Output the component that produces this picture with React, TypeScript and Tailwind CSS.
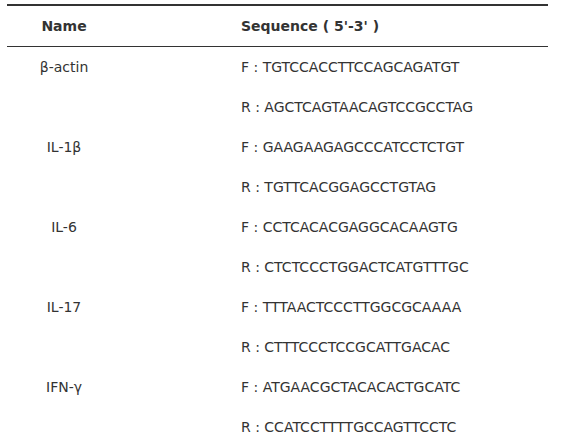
const primers = [
  { name: "β-actin", f: "TGTCCACCTTCCAGCAGATGT", r: "AGCTCAGTAACAGTCCGCCTAG" },
  { name: "IL-1β", f: "GAAGAAGAGCCCATCCTCTGT", r: "TGTTCACGGAGCCTGTAG" },
  { name: "IL-6", f: "CCTCACACGAGGCACAAGTG", r: "CTCTCCCTGGACTCATGTTTGC" },
  { name: "IL-17", f: "TTTAACTCCCTTGGCGCAAAA", r: "CTTTCCCTCCGCATTGACAC" },
  { name: "IFN-γ", f: "ATGAACGCTACACACTGCATC", r: "CCATCCTTTTGCCAGTTCCTC" },
];

function Row({ name, seq }: { name?: string; seq: string }) {
  return (
    <div className="flex h-[40px] items-center">
      <div className="w-[114px] text-center">{name}</div>
      <div className="pl-[120px]">{seq}</div>
    </div>
  );
}

export default function App() {
  return (
    <div className="h-[446px] w-[576px] overflow-hidden bg-white pt-[4px]">
      <div
        className="ml-[7px] w-[541px] border-t-2 border-[#333] text-[14px] text-[#333]"
        style={{ fontFamily: '"DejaVu Sans", sans-serif' }}
      >
        <div className="flex h-[41px] items-center border-b border-[#333] font-bold">
          <div className="w-[114px] text-center">Name</div>
          <div className="pl-[120px]">Sequence ( 5'-3' )</div>
        </div>
        {primers.map((p) => (
          <div key={p.name}>
            <Row name={p.name} seq={`F : ${p.f}`} />
            <Row seq={`R : ${p.r}`} />
          </div>
        ))}
      </div>
    </div>
  );
}
